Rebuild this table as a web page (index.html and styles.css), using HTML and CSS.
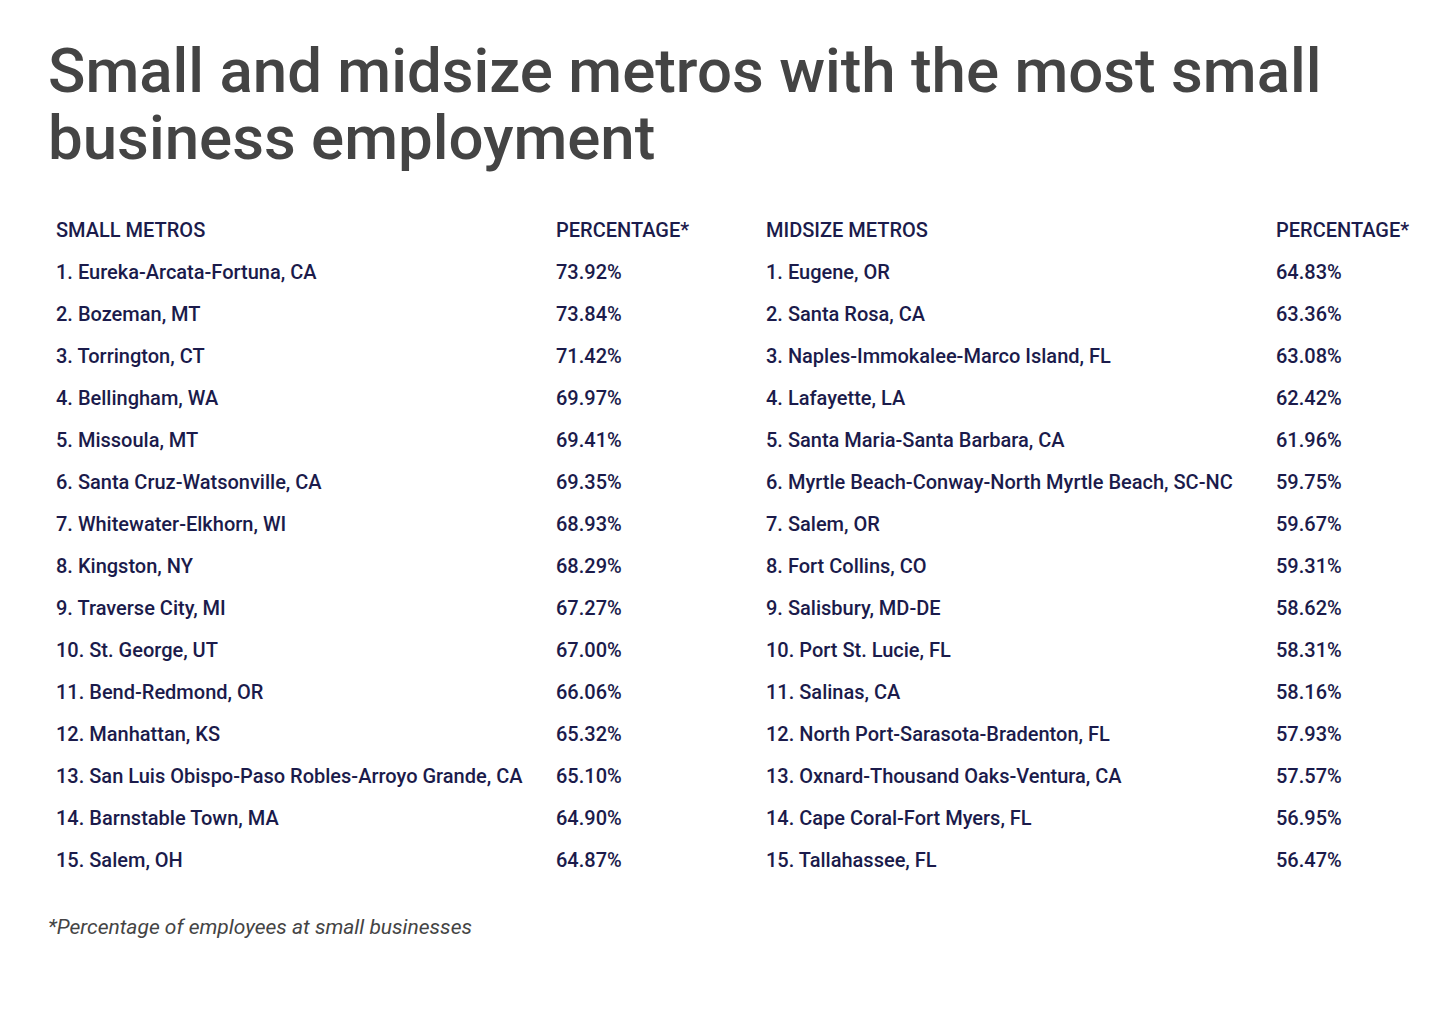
FILE: index.html
```html
<!DOCTYPE html>
<html>
<head>
<meta charset="utf-8">
<link rel="stylesheet" href="styles.css">
</head>
<body>
<main class="page">
  <h1 class="title">Small and midsize metros with the most small business employment</h1>
  <div class="table">
    <div class="cell head">SMALL METROS</div><div class="cell head">PERCENTAGE*</div><div class="cell head">MIDSIZE METROS</div><div class="cell head">PERCENTAGE*</div>
    <div class="cell">1. Eureka-Arcata-Fortuna, CA</div><div class="cell">73.92%</div><div class="cell">1. Eugene, OR</div><div class="cell">64.83%</div>
    <div class="cell">2. Bozeman, MT</div><div class="cell">73.84%</div><div class="cell">2. Santa Rosa, CA</div><div class="cell">63.36%</div>
    <div class="cell">3. Torrington, CT</div><div class="cell">71.42%</div><div class="cell">3. Naples-Immokalee-Marco Island, FL</div><div class="cell">63.08%</div>
    <div class="cell">4. Bellingham, WA</div><div class="cell">69.97%</div><div class="cell">4. Lafayette, LA</div><div class="cell">62.42%</div>
    <div class="cell">5. Missoula, MT</div><div class="cell">69.41%</div><div class="cell">5. Santa Maria-Santa Barbara, CA</div><div class="cell">61.96%</div>
    <div class="cell">6. Santa Cruz-Watsonville, CA</div><div class="cell">69.35%</div><div class="cell">6. Myrtle Beach-Conway-North Myrtle Beach, SC-NC</div><div class="cell">59.75%</div>
    <div class="cell">7. Whitewater-Elkhorn, WI</div><div class="cell">68.93%</div><div class="cell">7. Salem, OR</div><div class="cell">59.67%</div>
    <div class="cell">8. Kingston, NY</div><div class="cell">68.29%</div><div class="cell">8. Fort Collins, CO</div><div class="cell">59.31%</div>
    <div class="cell">9. Traverse City, MI</div><div class="cell">67.27%</div><div class="cell">9. Salisbury, MD-DE</div><div class="cell">58.62%</div>
    <div class="cell">10. St. George, UT</div><div class="cell">67.00%</div><div class="cell">10. Port St. Lucie, FL</div><div class="cell">58.31%</div>
    <div class="cell">11. Bend-Redmond, OR</div><div class="cell">66.06%</div><div class="cell">11. Salinas, CA</div><div class="cell">58.16%</div>
    <div class="cell">12. Manhattan, KS</div><div class="cell">65.32%</div><div class="cell">12. North Port-Sarasota-Bradenton, FL</div><div class="cell">57.93%</div>
    <div class="cell">13. San Luis Obispo-Paso Robles-Arroyo Grande, CA</div><div class="cell">65.10%</div><div class="cell">13. Oxnard-Thousand Oaks-Ventura, CA</div><div class="cell">57.57%</div>
    <div class="cell">14. Barnstable Town, MA</div><div class="cell">64.90%</div><div class="cell">14. Cape Coral-Fort Myers, FL</div><div class="cell">56.95%</div>
    <div class="cell">15. Salem, OH</div><div class="cell">64.87%</div><div class="cell">15. Tallahassee, FL</div><div class="cell">56.47%</div>
  </div>
  <p class="note">*Percentage of employees at small businesses</p>
</main>
</body>
</html>
```
FILE: styles.css
```css
html, body {
  margin: 0;
  padding: 0;
  background: #ffffff;
}
body {
  font-family: Roboto, "Liberation Sans", sans-serif;
}
.page {
  padding: 38px 48px 0 48px;
}
.title {
  margin: 0;
  font-size: 61.8px;
  line-height: 67px;
  font-weight: 500;
  color: #444444;
  max-width: 1320px;
}
.table {
  margin-top: 37px;
  display: grid;
  grid-template-columns: 500px 210px 510px auto;
}
.cell {
  padding: 0 8px;
  font-size: 20px;
  line-height: 42px;
  font-weight: 500;
  color: #1b1b4b;
  white-space: nowrap;
}
.note {
  margin: 31px 0 0 0;
  font-size: 21px;
  line-height: 30px;
  font-style: italic;
  color: #444444;
}
```
